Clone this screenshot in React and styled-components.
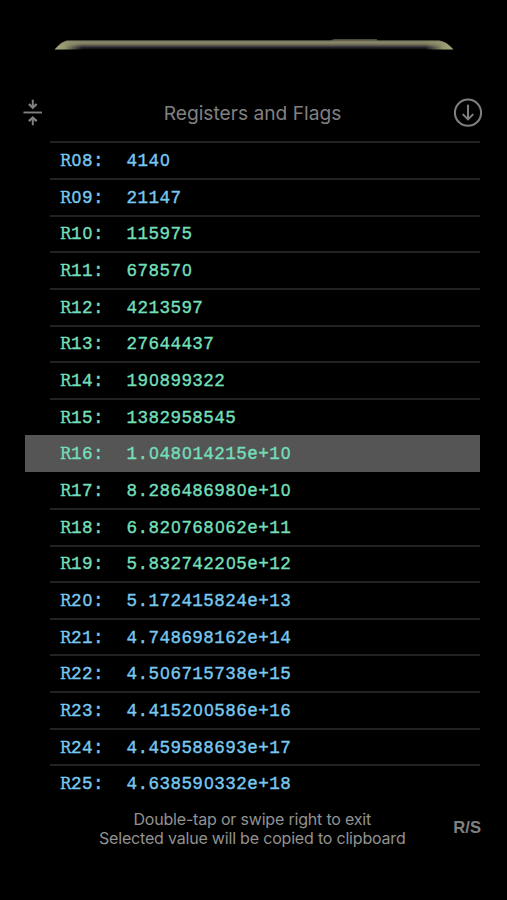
import React from 'react'
import styled, { createGlobalStyle } from 'styled-components'

const registers = [
  { name: 'R08', value: '4140', color: 'blue' },
  { name: 'R09', value: '21147', color: 'blue' },
  { name: 'R10', value: '115975' },
  { name: 'R11', value: '678570' },
  { name: 'R12', value: '4213597' },
  { name: 'R13', value: '27644437' },
  { name: 'R14', value: '190899322' },
  { name: 'R15', value: '1382958545' },
  { name: 'R16', value: '1.048014215e+10', selected: true },
  { name: 'R17', value: '8.286486980e+10' },
  { name: 'R18', value: '6.820768062e+11' },
  { name: 'R19', value: '5.832742205e+12' },
  { name: 'R20', value: '5.172415824e+13', color: 'blue' },
  { name: 'R21', value: '4.748698162e+14', color: 'blue' },
  { name: 'R22', value: '4.506715738e+15', color: 'blue' },
  { name: 'R23', value: '4.415200586e+16', color: 'blue' },
  { name: 'R24', value: '4.459588693e+17', color: 'blue' },
  { name: 'R25', value: '4.638590332e+18', color: 'blue' },
]

// slab R and plain zero, kept on the monospace grid
function Mono({ text }) {
  return text.split(/([R0])/).map((part, i) => {
    if (part === 'R') return <SlabR key={i}>R</SlabR>
    if (part === '0') return <Zero key={i}>0</Zero>
    return part
  })
}

function CollapseIcon() {
  return (
    <svg width="20" height="28" viewBox="0 0 20 28" fill="none" stroke="#808080">
      <path d="M0.5 13.5H19" strokeWidth="1.9" />
      <path d="M9.8 0.8V8M9.8 19.5V26.2" strokeWidth="2" />
      <path d="M5.9 5L9.8 8.6L13.7 5M5.9 22.2L9.8 18.6L13.7 22.2" strokeWidth="2.3" />
    </svg>
  )
}

function DownIcon() {
  return (
    <svg width="30" height="30" viewBox="0 0 30 30" fill="none" stroke="#808080" strokeWidth="2" strokeLinecap="round" strokeLinejoin="round">
      <circle cx="15" cy="14.7" r="13.1" />
      <path d="M15 7.4V21.4M10.2 16.6L15 21.4L19.8 16.6" />
    </svg>
  )
}

function Bezel() {
  return (
    <svg width="400" height="12" viewBox="0 0 400 12">
      <defs>
        <linearGradient id="metal" x1="0" y1="0" x2="0" y2="1">
          <stop offset="0" stopColor="#3c3d2e" />
          <stop offset="0.3" stopColor="#8e8d70" />
          <stop offset="0.55" stopColor="#6d6b53" />
          <stop offset="0.78" stopColor="#292733" />
          <stop offset="1" stopColor="#0a0a0c" />
        </linearGradient>
        <linearGradient id="tips" x1="0" y1="0" x2="1" y2="0">
          <stop offset="0" stopColor="#aaa982" />
          <stop offset="0.025" stopColor="#96966f" />
          <stop offset="0.07" stopColor="#96966f" stopOpacity="0" />
          <stop offset="0.93" stopColor="#96966f" stopOpacity="0" />
          <stop offset="0.975" stopColor="#96966f" />
          <stop offset="1" stopColor="#aaa982" />
        </linearGradient>
      </defs>
      <path d="M0.5 11.5L3 9C6 6 9 3 14 2.3H277L280 1H323V2.3H385C390 3 394 6 397 9L399.5 11.5Z" fill="url(#metal)" />
      <path d="M0.5 11.5L3 9C6 6 9 3.6 14 3.2H385C390 3.6 394 6 397 9L399.5 11.5Z" fill="url(#tips)" />
    </svg>
  )
}

function App() {
  return (
    <Screen>
      <GlobalStyle />
      <BezelBar><Bezel /></BezelBar>
      <Header>
        <IconButton aria-label="Collapse"><CollapseIcon /></IconButton>
        <Title>Registers and Flags</Title>
        <IconButton aria-label="Download"><DownIcon /></IconButton>
      </Header>
      <List>
        {registers.map(({ name, value, color, selected }, i) => (
          <Row
            key={name}
            $color={color}
            $selected={selected}
            $line={!selected && !(i > 0 && registers[i - 1].selected)}
          >
            <Name><Mono text={`${name}:`} /></Name>
            <Value><Mono text={value} /></Value>
          </Row>
        ))}
      </List>
      <Footer>
        <Hint>
          <p>Double-tap or swipe right to exit</p>
          <p>Selected value will be copied to clipboard</p>
        </Hint>
        <RunStop>R/S</RunStop>
      </Footer>
    </Screen>
  )
}

export default App

const GlobalStyle = createGlobalStyle`
    body {
        margin: 0;
        background: #000;
    }
    * {
        box-sizing: border-box;
    }
    p, h1, ul {
        margin: 0;
        padding: 0;
    }
`

const Screen = styled.div`
    width: 507px;
    height: 900px;
    background: #000;
    overflow: hidden;
    display: flex;
    flex-direction: column;
    font-family: Inter, "Liberation Sans", sans-serif;
`

const BezelBar = styled.div`
    display: flex;
    align-items: flex-start;
    height: 85px;
    padding: 38px 0 0 54px;
`

const Header = styled.header`
    height: 56.3px;
    padding: 0 24px 1px 23px;
    display: flex;
    align-items: center;
    justify-content: space-between;
`

const IconButton = styled.button`
    display: flex;
    padding: 0;
    border: 0;
    background: none;
`

const Title = styled.h1`
    margin-left: 9px;
    font-size: 19.2px;
    font-weight: 400;
    color: #808080;
    white-space: nowrap;
`

const List = styled.ul`
    list-style: none;
`

const Row = styled.li`
    display: flex;
    align-items: center;
    height: 36.66px;
    margin: 0 27px 0 ${props => (props.$selected ? '25px' : '50px')};
    padding: 1px 0 0 ${props => (props.$selected ? '35px' : '10px')};
    border-top: 2px solid ${props => (props.$line ? '#212121' : 'transparent')};
    background: ${props => (props.$selected ? '#555' : 'transparent')};
    box-shadow: ${props => (props.$selected ? '0 1px #555' : 'none')};
    color: ${props => (props.$color === 'blue' ? '#78c8f0' : '#73dfb9')};
    font-family: "Liberation Mono", monospace;
    font-size: 17.6px;
    letter-spacing: 0.42px;
    line-height: 22px;
    -webkit-text-stroke: 0.4px currentColor;
`

const Name = styled.span`
    width: 66.5px;
    white-space: nowrap;
`

const Value = styled.span`
    white-space: nowrap;
`

const SlabR = styled.span`
    display: inline-block;
    width: 10.98px;
    font-family: "DejaVu Serif", serif;
    font-size: 15.8px;
    line-height: 1;
    letter-spacing: 0;
    transform: scaleX(0.94);
    transform-origin: left;
    -webkit-text-stroke: 0.4px currentColor;
`

const Zero = styled.span`
    display: inline-block;
    width: 10.98px;
    text-align: center;
    font-family: "Liberation Sans", sans-serif;
    font-size: 16.8px;
    line-height: 1;
    letter-spacing: 0;
`

const Footer = styled.footer`
    display: flex;
    align-items: center;
    justify-content: space-between;
    padding: 9px 26px 0 99px;
`

const Hint = styled.div`
    text-align: center;
    font-size: 16px;
    letter-spacing: -0.19px;
    line-height: 19px;
    color: #929292;
    white-space: nowrap;
`

const RunStop = styled.span`
    padding-bottom: 3px;
    font-family: "Liberation Sans", sans-serif;
    font-size: 16.6px;
    font-weight: 700;
    color: #808080;
`
